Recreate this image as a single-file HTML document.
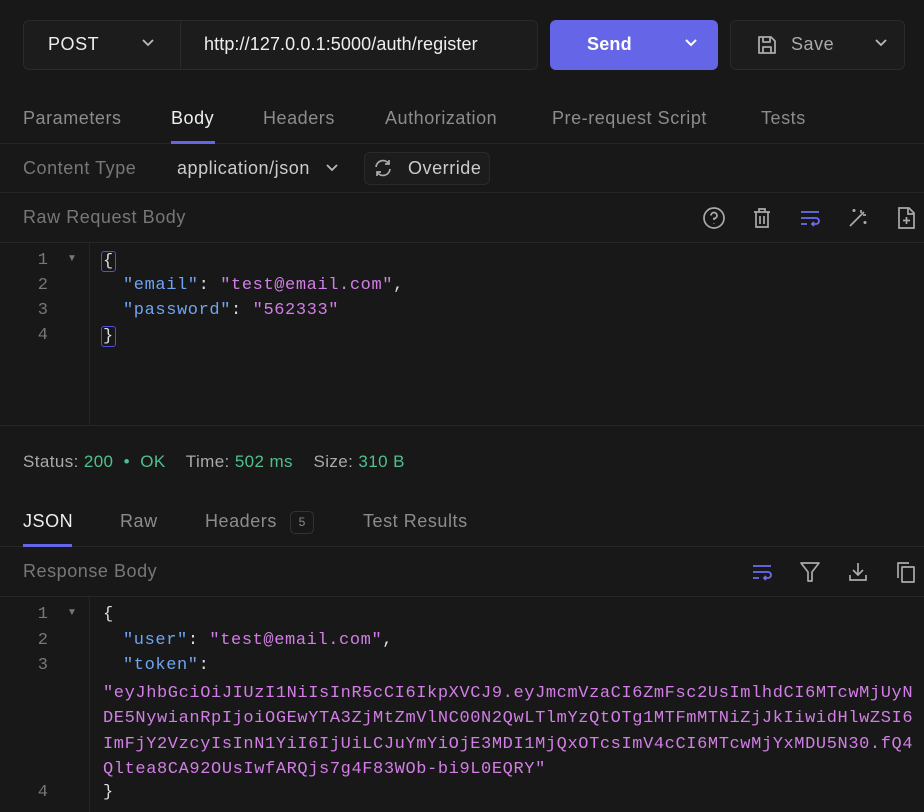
<!DOCTYPE html>
<html><head><meta charset="utf-8"><style>
*{box-sizing:border-box;margin:0;padding:0}
body{width:924px;height:812px;background:#181818;color:#ddd;font-family:"Liberation Sans",sans-serif;font-size:18px;letter-spacing:0.55px;position:relative;overflow:hidden}
.a{position:absolute;white-space:nowrap}
.box{position:absolute;border:1px solid #2a2a2a;background:#1c1c1d;border-radius:6px}
.sep{position:absolute;left:0;width:924px;height:1px;background:#262626}
.g{color:#8c8c8c}
.mono{font-family:"Liberation Mono",monospace;font-size:17px;letter-spacing:0.6px;margin-top:1px}
.ln{color:#777;text-align:right;width:30px;left:18px;letter-spacing:0}
.k{color:#6fa4f2}.s{color:#d27ee6}.w{color:#ddd}
svg{position:absolute}
</style></head><body>
<div class="box" style="left:23px;top:20px;width:515px;height:50px"></div>
<div class="a" style="left:180px;top:21px;width:1px;height:48px;background:#2a2a2a"></div>
<div class="a" style="left:48px;top:34px;color:#eee">POST</div>
<svg style="left:141px;top:38px" width="14" height="10" viewBox="0 0 14 10"><path d="M2 2l5 5 5-5" stroke="#bbb" stroke-width="1.8" fill="none"/></svg>
<div class="a" style="left:204px;top:34px;color:#eee;letter-spacing:0.1px">http://127.0.0.1:5000/auth/register</div>
<div class="a" style="left:550px;top:20px;width:168px;height:50px;background:#6466e7;border-radius:6px"></div>
<div class="a" style="left:587px;top:34px;color:#fff;font-weight:bold;letter-spacing:0.2px">Send</div>
<svg style="left:684px;top:38px" width="14" height="10" viewBox="0 0 14 10"><path d="M2 2l5 5 5-5" stroke="#fff" stroke-width="2" fill="none"/></svg>
<div class="box" style="left:730px;top:20px;width:175px;height:50px"></div>
<svg style="left:756px;top:34px" width="22" height="22" viewBox="0 0 22 22"><path d="M3 3h12l4 4v12H3z M7 3v5h7V3 M7 19v-6h8v6" stroke="#aaa" stroke-width="1.8" fill="none" stroke-linejoin="round"/></svg>
<div class="a" style="left:791px;top:34px;color:#aaa">Save</div>
<svg style="left:874px;top:38px" width="14" height="10" viewBox="0 0 14 10"><path d="M2 2l5 5 5-5" stroke="#bbb" stroke-width="1.8" fill="none"/></svg>

<div class="a g" style="left:23px;top:108px">Parameters</div>
<div class="a" style="left:171px;top:108px;color:#eee">Body</div>
<div class="a g" style="left:263px;top:108px">Headers</div>
<div class="a g" style="left:385px;top:108px">Authorization</div>
<div class="a g" style="left:552px;top:108px">Pre-request Script</div>
<div class="a g" style="left:761px;top:108px">Tests</div>
<div class="sep" style="top:143px"></div>
<div class="a" style="left:171px;top:141px;width:44px;height:3px;background:#6466e7"></div>

<div class="a" style="left:23px;top:158px;color:#777">Content Type</div>
<div class="a" style="left:177px;top:158px;color:#ccc">application/json</div>
<svg style="left:325px;top:163px" width="14" height="10" viewBox="0 0 14 10"><path d="M2 2l5 5 5-5" stroke="#bbb" stroke-width="1.8" fill="none"/></svg>
<div class="box" style="left:364px;top:152px;width:126px;height:33px"></div>
<svg style="left:372px;top:157px" width="22" height="22" viewBox="0 0 22 22"><path d="M4 10a7 7 0 0 1 13-3M18 12a7 7 0 0 1-13 3M17 3v4h-4M5 19v-4h4" stroke="#aaa" stroke-width="1.7" fill="none"/></svg>
<div class="a" style="left:408px;top:158px;color:#ccc">Override</div>
<div class="sep" style="top:192px"></div>

<div class="a" style="left:23px;top:207px;color:#777">Raw Request Body</div>
<svg style="left:702px;top:206px" width="24" height="24" viewBox="0 0 24 24"><circle cx="12" cy="12" r="10" stroke="#aaa" stroke-width="1.7" fill="none"/><path d="M9 9.5a3 3 0 1 1 3 3v1.5M12 17.5v.5" stroke="#aaa" stroke-width="1.7" fill="none"/></svg>
<svg style="left:750px;top:206px" width="24" height="24" viewBox="0 0 24 24"><path d="M4 6h16M9 6V3h6v3M6 6v15h12V6M10 10v8M14 10v8" stroke="#aaa" stroke-width="1.7" fill="none"/></svg>
<svg style="left:798px;top:206px" width="24" height="24" viewBox="0 0 24 24"><path d="M3 6h18M3 12h15a3 3 0 0 1 0 6h-4M3 18h6M16 16l-2 2 2 2" stroke="#6b6ef0" stroke-width="1.8" fill="none"/></svg>
<svg style="left:846px;top:206px" width="24" height="24" viewBox="0 0 24 24"><path d="M4 20L18 6M15 4v3M20 9h-3M8 3v3M6.5 4.5h3M19 15v3M17.5 16.5h3" stroke="#aaa" stroke-width="1.7" fill="none"/></svg>
<svg style="left:894px;top:206px" width="24" height="24" viewBox="0 0 24 24"><path d="M5 2h10l5 5v15H5zM14 2v6h6M12.5 11v7M9 14.5h7" stroke="#aaa" stroke-width="1.7" fill="none"/></svg>
<div class="sep" style="top:242px"></div>
<div class="a" style="left:89px;top:243px;width:1px;height:182px;background:#262626"></div>
<div class="a mono ln" style="top:250px">1</div><div class="a" style="left:67px;top:253px;color:#777;font-size:10px">▼</div>
<div class="a mono ln" style="top:275px">2</div>
<div class="a mono ln" style="top:300px">3</div>
<div class="a mono ln" style="top:325px">4</div>
<div class="a mono w" style="left:101px;top:250px;border:1px solid #4c4fe0;border-radius:3px;padding:0 1px">{</div>
<div class="a mono" style="left:123px;top:275px"><span class="k">"email"</span><span class="w">: </span><span class="s">"test@email.com"</span><span class="w">,</span></div>
<div class="a mono" style="left:123px;top:300px"><span class="k">"password"</span><span class="w">: </span><span class="s">"562333"</span></div>
<div class="a mono w" style="left:101px;top:325px;border:1px solid #4c4fe0;border-radius:3px;padding:0 1px">}</div>
<div class="sep" style="top:425px"></div>

<div class="a" style="left:23px;top:452px;font-size:17px;letter-spacing:0.4px;color:#aaa">Status: <span style="color:#4fc08d">200 &nbsp;•&nbsp; OK</span> &nbsp;&nbsp; Time: <span style="color:#4fc08d">502 ms</span> &nbsp;&nbsp; Size: <span style="color:#4fc08d">310 B</span></div>

<div class="a" style="left:23px;top:511px;color:#eee">JSON</div>
<div class="a g" style="left:120px;top:511px">Raw</div>
<div class="a g" style="left:205px;top:511px">Headers</div>
<div class="a" style="left:290px;top:511px;width:24px;height:23px;border:1px solid #333;border-radius:5px;color:#888;font-size:12px;text-align:center;line-height:21px;letter-spacing:0">5</div>
<div class="a g" style="left:363px;top:511px">Test Results</div>
<div class="sep" style="top:546px"></div>
<div class="a" style="left:23px;top:544px;width:49px;height:3px;background:#6466e7"></div>

<div class="a" style="left:23px;top:561px;color:#777">Response Body</div>
<svg style="left:750px;top:560px" width="24" height="24" viewBox="0 0 24 24"><path d="M3 6h18M3 12h15a3 3 0 0 1 0 6h-4M3 18h6M16 16l-2 2 2 2" stroke="#6b6ef0" stroke-width="1.8" fill="none"/></svg>
<svg style="left:798px;top:560px" width="24" height="24" viewBox="0 0 24 24"><path d="M3 3h18l-7 9v9h-4v-9z" stroke="#aaa" stroke-width="1.7" fill="none" stroke-linejoin="round"/></svg>
<svg style="left:846px;top:560px" width="24" height="24" viewBox="0 0 24 24"><path d="M12 3v12M7 10l5 5 5-5M4 15v5h16v-5" stroke="#aaa" stroke-width="1.7" fill="none"/></svg>
<svg style="left:894px;top:560px" width="24" height="24" viewBox="0 0 24 24"><path d="M4 18V3h11M8 7h12v15H8z" stroke="#aaa" stroke-width="1.7" fill="none" stroke-linejoin="round"/></svg>
<div class="sep" style="top:596px"></div>
<div class="a" style="left:89px;top:597px;width:1px;height:215px;background:#262626"></div>
<div class="a mono ln" style="top:604px">1</div><div class="a" style="left:67px;top:607px;color:#777;font-size:10px">▼</div>
<div class="a mono ln" style="top:630px">2</div>
<div class="a mono ln" style="top:655px">3</div>
<div class="a mono ln" style="top:782px">4</div>
<div class="a mono w" style="left:103px;top:604px">{</div>
<div class="a mono" style="left:123px;top:630px"><span class="k">"user"</span><span class="w">: </span><span class="s">"test@email.com"</span><span class="w">,</span></div>
<div class="a mono" style="left:123px;top:655px"><span class="k">"token"</span><span class="w">:</span></div>
<div class="a mono s" style="left:103px;top:680px;line-height:25.4px">"eyJhbGciOiJIUzI1NiIsInR5cCI6IkpXVCJ9.eyJmcmVzaCI6ZmFsc2UsImlhdCI6MTcwMjUyN<br>DE5NywianRpIjoiOGEwYTA3ZjMtZmVlNC00N2QwLTlmYzQtOTg1MTFmMTNiZjJkIiwidHlwZSI6<br>ImFjY2VzcyIsInN1YiI6IjUiLCJuYmYiOjE3MDI1MjQxOTcsImV4cCI6MTcwMjYxMDU5N30.fQ4<br>Qltea8CA92OUsIwfARQjs7g4F83WOb-bi9L0EQRY"</div>
<div class="a mono w" style="left:103px;top:782px">}</div>
</body></html>
